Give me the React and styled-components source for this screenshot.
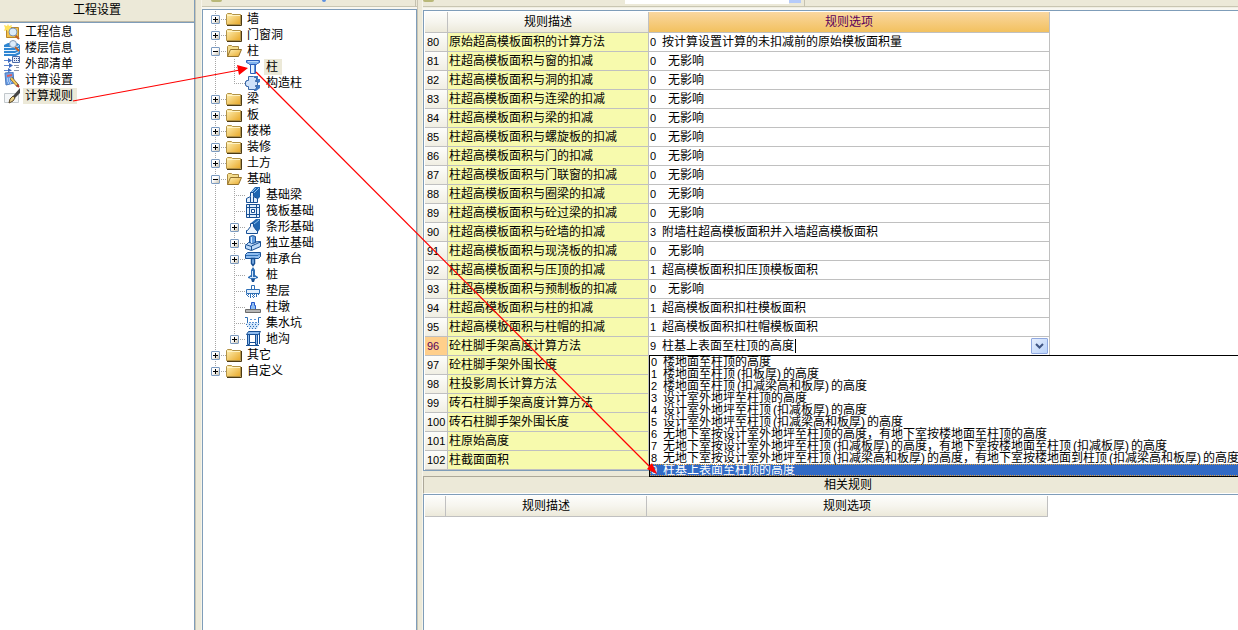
import React, { useState } from 'react';
import styled, { createGlobalStyle, css } from 'styled-components';

const GlobalStyle = createGlobalStyle`
  * {
    box-sizing: border-box;
  }

  body {
    margin: 0;
    background: #ffffff;
    color: #000000;
    font-family: "Liberation Sans", "Noto Sans CJK SC", sans-serif;
    font-size: 12px;
    line-height: 16px;
  }

  button, input {
    margin: 0;
    padding: 0;
    border: 0;
    background: none;
    color: inherit;
    font: inherit;
  }

  ul {
    margin: 0;
    padding: 0;
    list-style: none;
  }
`;

const Window = styled.div`
  position: relative;
  display: flex;
  min-height: 100vh;
  overflow: hidden;
  background: #ece9d8;
`;

const SettingsPane = styled.nav`
  display: flex;
  flex-direction: column;
  flex: 0 0 195px;
  border-right: 1px solid #7f9db9;
`;

const PaneTitle = styled.h1`
  margin: 0;
  height: 22px;
  padding: 2px 0 0;
  border-bottom: 1px solid #bdb9a8;
  font-size: 12px;
  font-weight: normal;
  text-align: center;
`;

const SettingsList = styled.ul`
  flex: 1;
  padding: 1px 0 0 4px;
  border-top: 1px solid #7f9db9;
  background: #ffffff;
`;

const SettingsItem = styled.li`
  display: flex;
  height: 16px;
`;

const ItemLabel = styled.button`
  height: 16px;
  margin-left: 3px;
  padding: 0 4px 0 2px;
  line-height: 16px;
  white-space: nowrap;
  background: ${({ $selected }) => ($selected ? '#ece9d8' : 'transparent')};
`;

const Splitter = styled.div`
  flex: 0 0 ${({ $size }) => $size}px;
  border-left: 1px solid #c9c5b4;
  border-right: 1px solid #f6f4ea;
  background: #ece9d8;
`;

const TreePane = styled.section`
  display: flex;
  flex-direction: column;
  flex: 0 0 215px;
`;

const Toolbar = styled.div`
  display: flex;
  height: ${({ $height }) => $height}px;
  border-bottom: 2px solid #f8f7f0;
  background: linear-gradient(#ece9d8 0 6px, #c9c6b2 6px 7px, #f0eee2 7px);
`;

const ToolIcon = styled.span`
  width: 11px;
  height: 2px;
  margin-left: ${({ $left }) => $left}px;
  border-radius: 0 0 2px 2px;
  background: #b9b878;
`;

const ToolArrow = styled.span`
  width: 4px;
  height: 2px;
  margin-left: 100px;
  border-radius: 0 0 2px 2px;
  background: #5b8fe0;
`;

const ToolField = styled.span`
  width: 164px;
  height: 4px;
  margin-left: 191px;
  background: #ffffff;
`;

const ToolDrop = styled.span`
  width: 12px;
  height: 3px;
  background: #b5cbfa;
`;

const ToolSeparator = styled.span`
  width: 1px;
  height: 7px;
  margin-left: ${({ $left }) => $left}px;
  background: #c5c2b0;
`;

const TreeBox = styled.div`
  flex: 1;
  padding-top: 1px;
  border: 1px solid #7f9db9;
  border-bottom: 0;
  background: #ffffff;
`;

const dotsDown = 'repeating-linear-gradient(to bottom, #a5a5a5 0 1px, transparent 1px 2px)';
const dotsAcross = 'repeating-linear-gradient(to right, #a5a5a5 0 1px, transparent 1px 2px)';

// The dotted guides are painted behind each item, the last one stops at its own row
const TreeItem = styled.li`
  background:
    ${dotsAcross} 12px 8px / 12px 1px no-repeat,
    ${dotsDown} 12px 0 / 1px 100% no-repeat;

  &:last-child {
    background:
      ${dotsAcross} 12px 8px / 12px 1px no-repeat,
      ${dotsDown} 12px 0 / 1px 8px no-repeat;
  }

  ul {
    padding-left: 19px;
  }
`;

const TreeRow = styled.div`
  display: flex;
  align-items: center;
  gap: 6px;
  height: 16px;
  padding-left: 8px;
`;

const TreeEntry = styled.span`
  display: flex;
`;

const Toggle = styled.button`
  display: flex;
  width: 9px;
  height: 9px;
  border: 1px solid #7b9ac0;
  border-radius: 1px;
  background: linear-gradient(135deg, #ffffff 40%, #c9c2b0);
`;

const ToggleSpace = styled.span`
  width: 9px;
`;

const RulesPane = styled.main`
  display: flex;
  flex-direction: column;
  flex: 1;
  min-width: 0;
  overflow: hidden;
`;

const GridBox = styled.div`
  padding: 1px 0 0 1px;
  border: 1px solid #7f9db9;
  border-right: 0;
  background: #ffffff;
  ${({ $fill }) => $fill && css`
    flex: 1;
    border-bottom: 0;
  `}
`;

const Grid = styled.table`
  table-layout: fixed;
  width: ${({ $width }) => $width}px;
  border-collapse: separate;
  border-spacing: 0;
`;

const HeadCell = styled.th`
  height: 21px;
  padding: 0;
  border-right: 1px solid #c0c0c0;
  border-bottom: 1px solid #c0c0c0;
  background: linear-gradient(#fdfdfb, #f6f5ee 50%, #ece9da);
  font-weight: normal;
  line-height: 18px;

  ${({ $active }) => $active && css`
    background: linear-gradient(#fad7a0, #f2c15f);
    color: #5a005a;
  `}
`;

const NumberCell = styled.th`
  height: 19px;
  padding: 0 0 0 2px;
  border-right: 1px solid #c0c0c0;
  border-bottom: 1px solid #c0c0c0;
  background: ${({ $active }) => ($active ? '#ffcf8b' : 'linear-gradient(#fdfdfb, #f0eee3)')};
  color: ${({ $active }) => ($active ? '#5a005a' : '#000000')};
  font-size: 11px;
  font-weight: normal;
  line-height: 18px;
  text-align: left;
`;

const RuleCell = styled.td`
  padding: 0 0 0 1px;
  border-right: 1px solid #c0c0c0;
  border-bottom: 1px solid #c0c0c0;
  background: #f7faad;
  line-height: 18px;
  white-space: nowrap;
`;

const OptionCell = styled.td`
  position: relative;
  padding: 0 0 0 1px;
  border-right: 1px solid #c0c0c0;
  border-bottom: 1px solid #c0c0c0;
  line-height: 18px;
  white-space: nowrap;
`;

const Code = styled.span`
  display: inline-block;
  width: ${({ $wide }) => ($wide ? 18 : 12)}px;
  font-size: 11px;
`;

const Combo = styled.div`
  display: flex;
  align-items: center;
  height: 18px;
  padding-right: 1px;
`;

const ComboInput = styled.input`
  width: 134px;
  height: 14px;
  border-right: 1px solid #000000;
  outline: 0;
`;

const ComboButton = styled.button`
  display: flex;
  align-items: center;
  justify-content: center;
  width: 17px;
  height: 16px;
  margin-left: auto;
  border: 1px solid #8fa8e0;
  border-radius: 1px;
  background: linear-gradient(135deg, #e6eefc, #b9d3fb);
`;

const OptionList = styled.ul`
  position: absolute;
  z-index: 1;
  top: 18px;
  left: 0;
  min-width: 600px;
  border: 1px solid #000000;
  background: #ffffff;
`;

const Option = styled.li`
  height: 12px;
  padding: 0 12px 0 1px;
  line-height: 12px;
  white-space: nowrap;

  &[aria-selected="true"] {
    outline: 1px dotted #e0a040;
    outline-offset: -1px;
    background: #316ac5;
    color: #ffffff;
  }
`;

const Paren = styled.span`
  display: inline-block;
  width: 6px;
  text-align: ${({ $open }) => ($open ? 'right' : 'left')};
`;

const RelatedTitle = styled.h2`
  margin: 5px 0 0;
  height: 18px;
  padding-left: 34px;
  border-top: 1px solid #aca899;
  border-left: 1px solid #aca899;
  border-bottom: 1px solid #ffffff;
  font-size: 12px;
  font-weight: normal;
  line-height: 16px;
  text-align: center;
`;

const Arrows = styled.svg`
  position: absolute;
  z-index: 2;
  top: 0;
  left: 0;
  pointer-events: none;
`;

const drawings = {
  info: (
    <>
      <path d="M2.500 3.500h12v10h-12z" fill="#f3c04a" stroke="#b8862b" />
      <path d="M0 1l3 1 1-2 1 2 3-1-1 3 1 3-3-1-1 2-1-2-3 1 1-3z" fill="#ffe25a" />
      <path d="M11 11l4 4" stroke="#c0622a" strokeWidth="2" />
      <circle cx="9" cy="8" r="4" fill="#dcecfb" stroke="#7d97b5" />
    </>
  ),
  floors: (
    <>
      <path d="M0 5l4-2h9l3 2v9l-4 2H0z" fill="#2f86d2" />
      <path d="M0 7.500h11l4-2M0 10.500h11l4-2M0 13.500h11l4-2" fill="none" stroke="#e9f5ff" />
      <path d="M11 7l4 4" stroke="#c0622a" strokeWidth="2" />
      <circle cx="9" cy="4" r="3.5" fill="#dcecfb" stroke="#8298b4" />
    </>
  ),
  list: (
    <>
      <path d="M8.500 .5h7v6h-7z" fill="#e6eefb" stroke="#4d6ba8" />
      <path d="M10 2.500h1m1 0h1m1 0h1M10 4.500h1m1 0h1m1 0h1" stroke="#35508c" />
      <path d="M0 4.500h6M0 9.500h7M0 14.500h6" stroke="#5f86cf" />
      <path d="M4 2l4 2.500L4 7zM5 7l4 2.500L5 12zM4 12l4 2.500L4 16z" fill="#3d69bd" />
      <path d="M10 9.500h5M12 11.500h3M10 14.500h5" stroke="#8a93a5" />
    </>
  ),
  calc: (
    <>
      <path d="M1 1l8-1 1 11-8 2z" fill="#6da0e6" stroke="#4b78bd" />
      <path d="M3 3l5-1v2L3 5z" fill="#e05a5a" />
      <path d="M3 7h5M3 9h5M4 11h4" stroke="#e6f0ff" strokeDasharray="1 1" />
      <path d="M7 6l7 8" stroke="#5a4020" strokeWidth="3" />
      <path d="M7 6l6 7" stroke="#f1c75a" strokeWidth="2" />
      <path d="M13 13l2 2" stroke="#b43a2c" strokeWidth="2" />
    </>
  ),
  rule: (
    <>
      <path d="M.5 5.500h14v9H.5z" fill="#f4f6f8" stroke="#c2c8cc" />
      <path d="M16 0v5l-5 5-2-2z" fill="#444444" />
      <path d="M9 8l2 2-2 3-4 2 1-4z" fill="#e9cf85" stroke="#5c4a2a" />
    </>
  ),
  folder: (
    <>
      <path d="M.5 3.500l1-1h4l1 1h8v10H.5z" fill="url(#folderFill)" stroke="#b39346" />
      <path d="M1 4.500h13" stroke="#fff3c4" />
      <path d="M1 14.500h14.500V4" fill="none" stroke="#4c3a14" />
    </>
  ),
  folderOpen: (
    <>
      <path d="M1.500 13.500v-10l1-1h3l1 1h6v3" fill="#f4dc8c" stroke="#a98840" />
      <path d="M1.500 13.500l3-7h11l-3 7z" fill="url(#folderFill)" stroke="#94722c" />
    </>
  ),
  column: (
    <>
      <path d="M1.500 1.500h13v2l-2 1-1 1h-7l-1-1-2-1z" fill="#7fb2ee" stroke="#2a5cb8" />
      <path d="M3 2.500h10" stroke="#b9d8fb" />
      <path d="M5.500 5.500h5v9h-5z" fill="#e4f1ff" stroke="#2a5cb8" />
      <path d="M9.500 6v8" stroke="#5b93dc" />
    </>
  ),
  structColumn: (
    <>
      <path d="M9 1h4v3h2v3l-2 1v2h2v3l-4 3H9z" fill="#3f7ac6" />
      <path d="M3.500 1.500h5l1 1h2v3h-1v1h2v4h-2v1h1v2l-2 1h-6v-3h-2v-1h-1v-4h1v-1h2z" fill="#cfe2fa" stroke="#3a68a8" />
    </>
  ),
  beam: (
    <>
      <path d="M5 6l5-6h5v10l-4 4z" fill="#1f66b0" />
      <path d="M9 6l5-5M7 5l4-4" stroke="#8cc0f0" />
      <path d="M1.500 15.500v-4l4-2v-4h3v4l4 2v4z" fill="#e3f0fd" stroke="#174f94" />
      <path d="M5.500 15v-5M8.500 15v-5" stroke="#174f94" />
    </>
  ),
  raft: (
    <>
      <path d="M1.500 1.500h13v13h-13z" fill="#e2effc" stroke="#174f94" />
      <path d="M4.500 1v14M11.500 1v14M1 4.500h14M1 11.500h14" stroke="#174f94" />
      <path d="M6.500 6.500h3v3h-3z" fill="#ffffff" stroke="#174f94" />
    </>
  ),
  strip: (
    <>
      <path d="M6 4l5-4h4v10l-3 4z" fill="#1f66b0" />
      <path d="M9 5l5-4" stroke="#8cc0f0" />
      <path d="M1.500 14.500v-3h1l3-4v-3h3v3l3 4h1v3z" fill="#e8f3fe" stroke="#174f94" />
    </>
  ),
  isolated: (
    <>
      <path d="M.5 10.500l3-3 12-1v5l-9 4-6-2z" fill="#bcd8f6" stroke="#174f94" />
      <path d="M6.500 15v-4l9-4M.5 9.500l6 2" fill="none" stroke="#174f94" />
      <path d="M4.500 1.500l3-1 3 1v6l-3 1-3-1z" fill="#5f9add" stroke="#174f94" />
      <path d="M6.500 2v6" stroke="#d6eaff" />
    </>
  ),
  pileCap: (
    <>
      <path d="M.5 3.500l2-2h13v4l-2 2H.5z" fill="#8ebcf0" stroke="#174f94" />
      <path d="M1 4.500h12l2-2" fill="none" stroke="#2f6fb6" />
      <path d="M6.500 7.500h3v5l-1.500 2-1.500-2z" fill="#8ebcf0" stroke="#174f94" strokeWidth="1.5" />
    </>
  ),
  pile: (
    <>
      <path d="M8 0l2 3v5l3 2v1l-3 1H6l-3-1v-1l3-2V3z" fill="#2f6fb6" />
      <path d="M7.500 4v7M5 10.500h6" stroke="#cfe4fb" />
      <path d="M6 12h4l-1 3H7z" fill="#174f94" />
    </>
  ),
  cushion: (
    <>
      <path d="M6.500 2.500h3v5h-3z" fill="#ffffff" stroke="#2f6fb6" />
      <path d="M1.500 6.500h13v4h-13z" fill="#e3f0fd" stroke="#2f6fb6" />
      <path d="M1 11.500h14M3 13.500h10" stroke="#2f6fb6" strokeDasharray="1 1" />
      <path d="M2 12.500h12M5 14.500h6" stroke="#2f6fb6" strokeDasharray="1 2" />
    </>
  ),
  pier: (
    <>
      <path d="M6.500 3.500h3v3h1v4h-5v-4h1z" fill="#8ebcf0" stroke="#2456c8" />
      <path d="M.5 10.500h15v3H.5z" fill="#b5b5b5" stroke="#6c6c6c" />
    </>
  ),
  sump: (
    <>
      <path d="M0 2.500h2.500v6l4 1M16 2.500h-2.500v6l-4 1" fill="none" stroke="#2f6fb6" />
      <path d="M1 8h14l-3 6H5z" fill="#cfe4fa" />
      <path d="M1 9.500h14M2 11.500h12M4 13.500h8" stroke="#2f6fb6" strokeDasharray="1 2" />
      <path d="M5 4.500h2m2 0h2M4 7.500h8" stroke="#5b93d6" strokeDasharray="2 1" />
    </>
  ),
  trench: (
    <>
      <path d="M1.500 3.500l2-3h12l-2 3z" fill="#8ebcf0" stroke="#174f94" />
      <path d="M2.500 3.500h2v10h-2zM10.500 3.500h2v10h-2z" fill="#8ebcf0" stroke="#174f94" />
      <path d="M1 14.500h13M14.500 2v11M5 11.500h5" stroke="#174f94" />
    </>
  ),
};

const Icon = ({ name }) => (
  <svg width="16" height="16" viewBox="0 0 16 16" aria-hidden="true">
    {drawings[name]}
  </svg>
);

const settings = [
  { label: '工程信息', icon: 'info' },
  { label: '楼层信息', icon: 'floors' },
  { label: '外部清单', icon: 'list' },
  { label: '计算设置', icon: 'calc' },
  { label: '计算规则', icon: 'rule' },
];

const tree = [
  { label: '墙' },
  { label: '门窗洞' },
  {
    label: '柱',
    children: [
      { label: '柱', icon: 'column', selected: true },
      { label: '构造柱', icon: 'structColumn' },
    ],
  },
  { label: '梁' },
  { label: '板' },
  { label: '楼梯' },
  { label: '装修' },
  { label: '土方' },
  {
    label: '基础',
    children: [
      { label: '基础梁', icon: 'beam' },
      { label: '筏板基础', icon: 'raft' },
      { label: '条形基础', icon: 'strip', closed: true },
      { label: '独立基础', icon: 'isolated', closed: true },
      { label: '桩承台', icon: 'pileCap', closed: true },
      { label: '桩', icon: 'pile' },
      { label: '垫层', icon: 'cushion' },
      { label: '柱墩', icon: 'pier' },
      { label: '集水坑', icon: 'sump' },
      { label: '地沟', icon: 'trench', closed: true },
    ],
  },
  { label: '其它' },
  { label: '自定义' },
];

const none = { code: 0, text: '无影响', wide: true };

const rules = [
  { id: 80, name: '原始超高模板面积的计算方法', option: { code: 0, text: '按计算设置计算的未扣减前的原始模板面积量' } },
  { id: 81, name: '柱超高模板面积与窗的扣减', option: none },
  { id: 82, name: '柱超高模板面积与洞的扣减', option: none },
  { id: 83, name: '柱超高模板面积与连梁的扣减', option: none },
  { id: 84, name: '柱超高模板面积与梁的扣减', option: none },
  { id: 85, name: '柱超高模板面积与螺旋板的扣减', option: none },
  { id: 86, name: '柱超高模板面积与门的扣减', option: none },
  { id: 87, name: '柱超高模板面积与门联窗的扣减', option: none },
  { id: 88, name: '柱超高模板面积与圈梁的扣减', option: none },
  { id: 89, name: '柱超高模板面积与砼过梁的扣减', option: none },
  { id: 90, name: '柱超高模板面积与砼墙的扣减', option: { code: 3, text: '附墙柱超高模板面积并入墙超高模板面积' } },
  { id: 91, name: '柱超高模板面积与现浇板的扣减', option: none },
  { id: 92, name: '柱超高模板面积与压顶的扣减', option: { code: 1, text: '超高模板面积扣压顶模板面积' } },
  { id: 93, name: '柱超高模板面积与预制板的扣减', option: none },
  { id: 94, name: '柱超高模板面积与柱的扣减', option: { code: 1, text: '超高模板面积扣柱模板面积' } },
  { id: 95, name: '柱超高模板面积与柱帽的扣减', option: { code: 1, text: '超高模板面积扣柱帽模板面积' } },
  { id: 96, name: '砼柱脚手架高度计算方法', editing: true },
  { id: 97, name: '砼柱脚手架外围长度' },
  { id: 98, name: '柱投影周长计算方法' },
  { id: 99, name: '砖石柱脚手架高度计算方法' },
  { id: 100, name: '砖石柱脚手架外围长度' },
  { id: 101, name: '柱原始高度' },
  { id: 102, name: '柱截面面积' },
];

const heightOptions = [
  '楼地面至柱顶的高度',
  '楼地面至柱顶(扣板厚)的高度',
  '楼地面至柱顶(扣减梁高和板厚)的高度',
  '设计室外地坪至柱顶的高度',
  '设计室外地坪至柱顶(扣减板厚)的高度',
  '设计室外地坪至柱顶(扣减梁高和板厚)的高度',
  '无地下室按设计室外地坪至柱顶的高度，有地下室按楼地面至柱顶的高度',
  '无地下室按设计室外地坪至柱顶(扣减板厚)的高度，有地下室按楼地面至柱顶(扣减板厚)的高度',
  '无地下室按设计室外地坪至柱顶(扣减梁高和板厚)的高度，有地下室按楼地面到柱顶(扣减梁高和板厚)的高度',
  '柱基上表面至柱顶的高度',
];

const OptionText = ({ text }) =>
  text.split(/([()])/).map((part, index) =>
    part === '(' || part === ')' ? (
      <Paren key={index} $open={part === '('}>{part}</Paren>
    ) : (
      part
    )
  );

const TreeNode = ({ node }) => {
  const [open, setOpen] = useState(Boolean(node.children));
  const hasToggle = !node.icon || node.closed;
  const icon = node.icon || (open && node.children ? 'folderOpen' : 'folder');

  return (
    <TreeItem>
      <TreeRow>
        {hasToggle ? (
          <Toggle aria-label={node.label} aria-expanded={open} onClick={() => setOpen(!open)}>
            <svg width="7" height="7" viewBox="0 0 7 7" aria-hidden="true">
              <path d={open ? 'M1 3.500h5' : 'M1 3.500h5M3.500 1v5'} stroke="#000000" />
            </svg>
          </Toggle>
        ) : (
          <ToggleSpace />
        )}
        <TreeEntry>
          <Icon name={icon} />
          <ItemLabel $selected={node.selected}>{node.label}</ItemLabel>
        </TreeEntry>
      </TreeRow>
      {open && node.children && (
        <ul>
          {node.children.map((child) => (
            <TreeNode key={child.label} node={child} />
          ))}
        </ul>
      )}
    </TreeItem>
  );
};

const HeightCombo = () => {
  const [selected, setSelected] = useState(9);
  const [open, setOpen] = useState(true);

  return (
    <>
      <Combo>
        <Code>{selected}</Code>
        <ComboInput
          role="combobox"
          aria-label="砼柱脚手架高度计算方法"
          aria-expanded={open}
          aria-controls="height-options"
          value={heightOptions[selected]}
          readOnly
        />
        <ComboButton aria-label="规则选项" onClick={() => setOpen(!open)}>
          <svg width="9" height="6" viewBox="0 0 9 6" aria-hidden="true">
            <path d="M1 1l3.500 3.500L8 1" fill="none" stroke="#3f5583" strokeWidth="2" />
          </svg>
        </ComboButton>
      </Combo>
      {open && (
        <OptionList id="height-options" role="listbox" aria-label="规则选项">
          {heightOptions.map((text, index) => (
            <Option
              key={text}
              role="option"
              aria-selected={index === selected}
              onClick={() => setSelected(index)}
            >
              <Code>{index}</Code>
              <OptionText text={text} />
            </Option>
          ))}
        </OptionList>
      )}
    </>
  );
};

const App = () => (
  <>
    <GlobalStyle />
    <Window>
      <SettingsPane>
        <PaneTitle>工程设置</PaneTitle>
        <SettingsList>
          {settings.map((item) => (
            <SettingsItem key={item.label}>
              <Icon name={item.icon} />
              <ItemLabel $selected={item.icon === 'rule'}>{item.label}</ItemLabel>
            </SettingsItem>
          ))}
        </SettingsList>
      </SettingsPane>
      <Splitter $size={7} />
      <TreePane>
        <Toolbar $height={9}>
          <ToolIcon $left={9} />
          <ToolArrow />
          <ToolSeparator $left={89} />
        </Toolbar>
        <TreeBox>
          <ul>
            {tree.map((node) => (
              <TreeNode key={node.label} node={node} />
            ))}
          </ul>
        </TreeBox>
      </TreePane>
      <Splitter $size={6} />
      <RulesPane>
        <Toolbar $height={10}>
          <ToolIcon $left={0} />
          <ToolField />
          <ToolDrop />
          <ToolSeparator $left={3} />
        </Toolbar>
        <GridBox>
          <Grid $width={625}>
            <colgroup>
              <col width="23" />
              <col width="201" />
              <col width="401" />
            </colgroup>
            <thead>
              <tr>
                <HeadCell aria-label="序号" />
                <HeadCell>规则描述</HeadCell>
                <HeadCell $active>规则选项</HeadCell>
              </tr>
            </thead>
            <tbody>
              {rules.map(({ id, name, option, editing }) => (
                <tr key={id}>
                  <NumberCell scope="row" $active={editing}>{id}</NumberCell>
                  <RuleCell>{name}</RuleCell>
                  <OptionCell>
                    {editing && <HeightCombo />}
                    {option && (
                      <>
                        <Code $wide={option.wide}>{option.code}</Code>
                        {option.text}
                      </>
                    )}
                  </OptionCell>
                </tr>
              ))}
            </tbody>
          </Grid>
        </GridBox>
        <RelatedTitle>相关规则</RelatedTitle>
        <GridBox $fill>
          <Grid $width={623}>
            <colgroup>
              <col width="21" />
              <col width="201" />
              <col width="401" />
            </colgroup>
            <thead>
              <tr>
                <HeadCell aria-label="序号" />
                <HeadCell>规则描述</HeadCell>
                <HeadCell>规则选项</HeadCell>
              </tr>
            </thead>
          </Grid>
        </GridBox>
      </RulesPane>
      <Arrows width="660" height="480" viewBox="0 0 660 480" aria-hidden="true">
        <defs>
          <linearGradient id="folderFill" x1="0" y1="0" x2="1" y2="1">
            <stop offset="0" stopColor="#fff2b8" />
            <stop offset="1" stopColor="#e8a828" />
          </linearGradient>
        </defs>
        <path d="M73 101L240 70" fill="none" stroke="#ff0000" strokeWidth="1.2" />
        <path d="M256 72L654 471" fill="none" stroke="#ff0000" strokeWidth="1.2" />
        <path d="M237 65L248 68L239 75ZM652 463L657 474L647 469Z" fill="#ff0000" />
      </Arrows>
    </Window>
  </>
);

export default App;
